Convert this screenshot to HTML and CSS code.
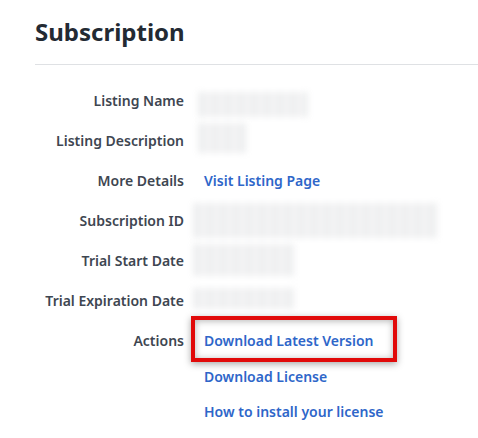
FILE: index.html
```html
<!DOCTYPE html>
<html>
<head>
<meta charset="utf-8">
<link rel="stylesheet" href="styles.css">
</head>
<body>
<div class="page">
  <h1 class="title">Subscription</h1>
  <div class="divider"></div>
  <div class="details">
    <div class="label">Listing Name</div>
    <div class="value"><div class="redacted r-name"></div></div>

    <div class="label">Listing Description</div>
    <div class="value"><div class="redacted r-desc"></div></div>

    <div class="label">More Details</div>
    <div class="value"><a class="link" href="#">Visit Listing Page</a></div>

    <div class="label">Subscription ID</div>
    <div class="value"><div class="redacted r-id"></div></div>

    <div class="label">Trial Start Date</div>
    <div class="value"><div class="redacted r-start"></div></div>

    <div class="label">Trial Expiration Date</div>
    <div class="value"><div class="redacted r-exp"></div></div>

    <div class="label label-top">Actions</div>
    <div class="value actions">
      <a class="link highlighted" href="#">Download Latest Version</a>
      <a class="link" href="#">Download License</a>
      <a class="link" href="#">How to install your license</a>
    </div>
  </div>
</div>
</body>
</html>
```
FILE: styles.css
```css
html, body {
  margin: 0;
  padding: 0;
  background: #ffffff;
}

body {
  font-family: "Noto Sans", "Open Sans", "DejaVu Sans", sans-serif;
  width: 478px;
  height: 438px;
  overflow: hidden;
}

.page {
  padding: 0 0 0 35px;
}

.title {
  margin: 0;
  padding-top: 16px;
  font-size: 24px;
  line-height: 32px;
  font-weight: 700;
  color: #232a33;
}

.divider {
  margin-top: 16px;
  height: 1px;
  background: #dfe1e4;
}

.details {
  margin-top: 16px;
  display: grid;
  grid-template-columns: 149px 1fr;
  column-gap: 20px;
  grid-auto-rows: 40px;
}

.label {
  font-size: 14px;
  font-weight: 600;
  color: #3e4651;
  text-align: right;
  line-height: 40px;
  white-space: nowrap;
}

.value {
  display: flex;
  align-items: center;
  min-width: 0;
}

.link {
  font-size: 14px;
  font-weight: 600;
  color: #2e66c9;
  text-decoration: none;
  line-height: 20px;
  white-space: nowrap;
}

.actions {
  grid-row: span 3;
  flex-direction: column;
  align-items: flex-start;
  justify-content: flex-start;
  padding-top: 10px;
  gap: 15.5px;
}

.highlighted {
  position: relative;
}

.highlighted::after {
  content: "";
  position: absolute;
  left: -13px;
  top: -15px;
  width: 206px;
  height: 46px;
  box-sizing: border-box;
  border: 4px solid #e10a0a;
  box-shadow: 0 2px 7px rgba(0, 0, 0, 0.35), inset 0 1px 7px rgba(0, 0, 0, 0.3);
}

.redacted {
  background:
    repeating-linear-gradient(90deg, #eeeff0 0px, #eeeff0 8px, #f5f5f6 8px, #f5f5f6 13px);
  filter: blur(3px);
}

.r-name {
  width: 110px;
  height: 25px;
  margin: 7px 0 0 -6px;
}

.r-desc {
  width: 49px;
  height: 30px;
  margin: -6px 0 0 -6px;
}

.r-id {
  width: 245px;
  height: 35px;
  margin: -2px 0 0 -11px;
}

.r-start {
  width: 102px;
  height: 32px;
  margin: -2px 0 0 -11px;
}

.r-exp {
  width: 102px;
  height: 21px;
  margin: -5px 0 0 -11px;
}
```
